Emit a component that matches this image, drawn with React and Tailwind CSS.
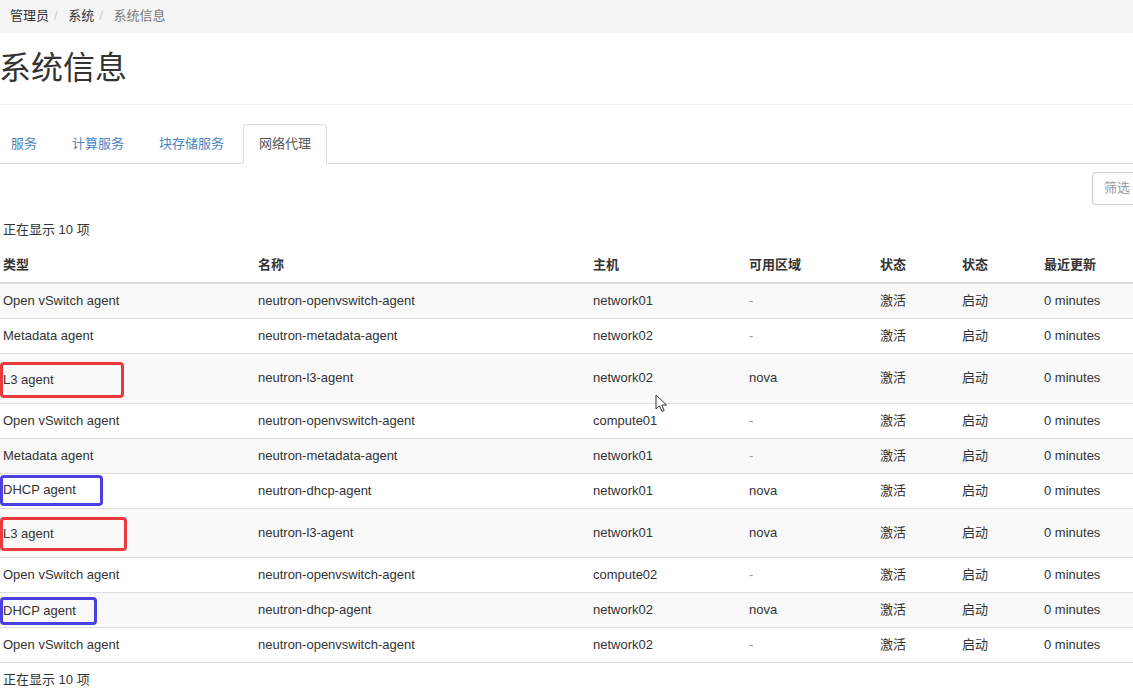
import React from 'react';

const rows = [
    { type: 'Open vSwitch agent', name: 'neutron-openvswitch-agent', host: 'network01', zone: '-' },
    { type: 'Metadata agent', name: 'neutron-metadata-agent', host: 'network02', zone: '-' },
    { type: 'L3 agent', name: 'neutron-l3-agent', host: 'network02', zone: 'nova', mark: 'h-[36px] w-[124px] -mb-[3px] border-[#ea3a3e]' },
    { type: 'Open vSwitch agent', name: 'neutron-openvswitch-agent', host: 'compute01', zone: '-' },
    { type: 'Metadata agent', name: 'neutron-metadata-agent', host: 'network01', zone: '-' },
    { type: 'DHCP agent', name: 'neutron-dhcp-agent', host: 'network01', zone: 'nova', mark: 'h-[31px] w-[103px] -mt-[7px] -mb-[6px] border-[#4b3fe4]' },
    { type: 'L3 agent', name: 'neutron-l3-agent', host: 'network01', zone: 'nova', mark: 'h-[34px] w-[127px] -mb-[2px] border-[#ea3a3e]' },
    { type: 'Open vSwitch agent', name: 'neutron-openvswitch-agent', host: 'compute02', zone: '-' },
    { type: 'DHCP agent', name: 'neutron-dhcp-agent', host: 'network02', zone: 'nova', mark: 'h-[28px] w-[97px] -mt-[4px] -mb-[6px] border-[#4b3fe4]' },
    { type: 'Open vSwitch agent', name: 'neutron-openvswitch-agent', host: 'network02', zone: '-' },
];

const tabs = ['服务', '计算服务', '块存储服务'];

const headers = ['类型', '名称', '主机', '可用区域', '状态', '状态', '最近更新'];

export default function App() {
    const td = 'px-2 py-2 align-middle border-t border-[#ddd]';

    return (
        <div className="relative w-[1133px] h-[696px] overflow-hidden bg-white font-['Liberation_Sans','Noto_Sans_CJK_SC',sans-serif] text-[13px] leading-[1.42857] text-[#333]">
            <div className="-ml-[5px] w-[1138px]">
                {/* breadcrumb */}
                <div className="h-[33px] bg-[#f5f5f5] px-[15px] flex items-center">
                    <span>管理员</span>
                    <span className="pl-[5px] pr-[7px] text-[#ccc]">/&nbsp;</span>
                    <span>系统</span>
                    <span className="pl-[5px] pr-[7px] text-[#ccc]">/&nbsp;</span>
                    <span className="text-[#777]">系统信息</span>
                </div>

                {/* page header */}
                <div className="mt-[18px] pb-[18px] border-b border-[#eee]">
                    <h1 className="text-[32px] leading-[35px] font-normal pl-[4px]">系统信息</h1>
                </div>

                {/* tabs */}
                <ul className="mt-[19px] flex border-b border-[#ddd]">
                    {tabs.map((t) => (
                        <li key={t} className="mr-[3px] -mb-px">
                            <span className="h-[40px] px-[15px] flex items-center border border-transparent text-[#4a84c1]">{t}</span>
                        </li>
                    ))}
                    <li className="-mb-px">
                        <span className="h-[40px] px-[15px] flex items-center border border-[#ddd] border-b-transparent rounded-t-[4px] bg-white text-[#555]">网络代理</span>
                    </li>
                </ul>

                {/* filter */}
                <div className="mt-[8px] flex justify-end">
                    <div className="h-[33px] w-[200px] -mr-[159px] border border-[#ccc] rounded-[4px] pl-[11px] flex items-center text-[#999]">筛选</div>
                </div>

                <div className="mt-[16px] pl-2">正在显示 10 项</div>

                <table className="mt-[8px] w-[1138px] table-fixed border-collapse leading-[18px]">
                    <colgroup>
                        <col className="w-[255px]" />
                        <col className="w-[335px]" />
                        <col className="w-[156px]" />
                        <col className="w-[131px]" />
                        <col className="w-[82px]" />
                        <col className="w-[82px]" />
                        <col />
                    </colgroup>
                    <thead>
                        <tr>
                            {headers.map((h, i) => (
                                <th key={i} className="px-2 py-2 text-left font-bold border-b-2 border-[#ddd]">{h}</th>
                            ))}
                        </tr>
                    </thead>
                    <tbody>
                        {rows.map((row, index) => (
                            <tr key={index} className={index % 2 === 0 ? 'bg-[#f9f9f9]' : 'bg-white'}>
                                <td className={td}>
                                    {row.mark ? (
                                        <div className={`-ml-[3px] flex items-center border-[3px] rounded-[4px] ${row.mark}`}>{row.type}</div>
                                    ) : row.type}
                                </td>
                                <td className={td}>{row.name}</td>
                                <td className={td}>{row.host}</td>
                                <td className={`${td} ${row.zone === '-' ? 'text-[#999]' : ''}`}>{row.zone}</td>
                                <td className={td}>激活</td>
                                <td className={td}>启动</td>
                                <td className={td}>0 minutes</td>
                            </tr>
                        ))}
                    </tbody>
                    <tfoot>
                        <tr>
                            <td colSpan={7} className={td}>正在显示 10 项</td>
                        </tr>
                    </tfoot>
                </table>
            </div>

            {/* mouse pointer */}
            <svg className="absolute left-[655px] top-[394px]" width="13" height="19" viewBox="0 0 13 19">
                <path d="M1 1 L1 15 L4.5 11.8 L7 17.5 L9.2 16.5 L6.8 11 L11.5 11 Z" fill="white" stroke="#333" strokeWidth="1" strokeLinejoin="round" />
            </svg>
        </div>
    );
}
